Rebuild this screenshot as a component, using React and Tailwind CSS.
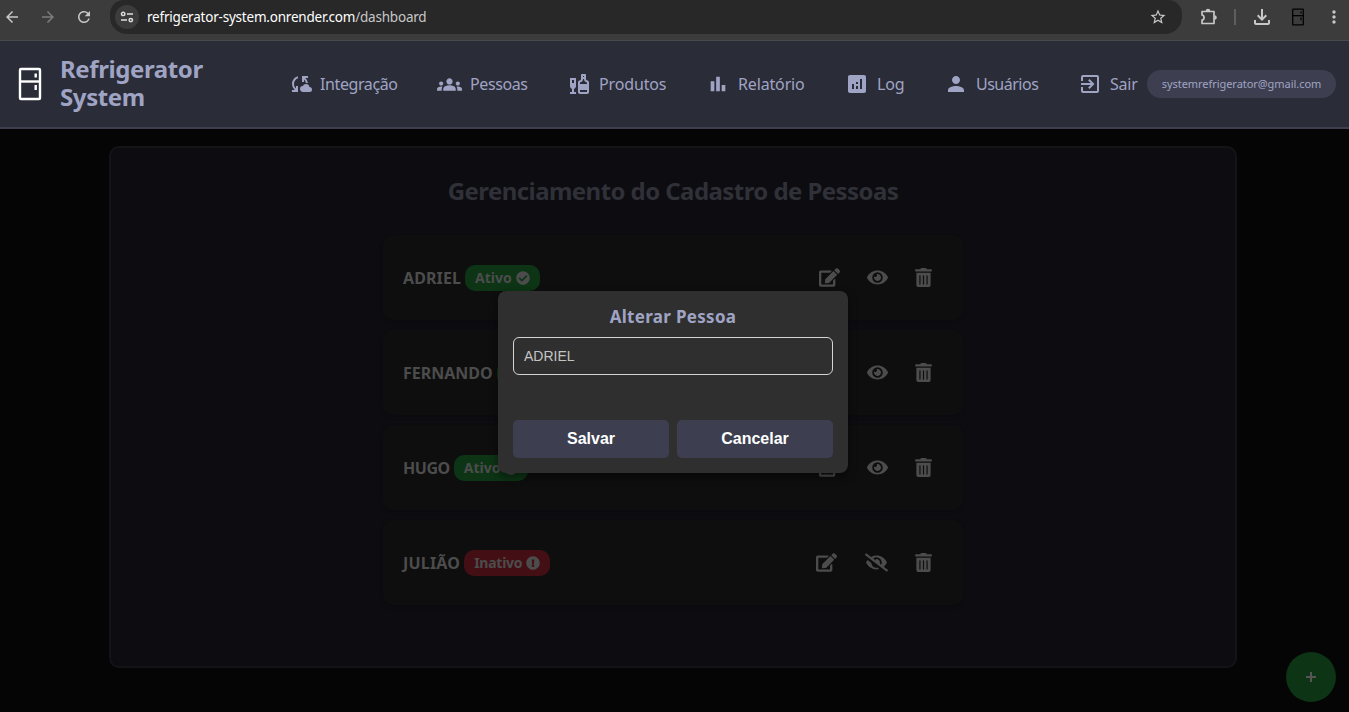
import React from "react";
import { MdCloudSync, MdGroups, MdLiquor, MdBarChart, MdAnalytics, MdPerson, MdExitToApp, MdStarBorder, MdOutlineFileDownload, MdMoreVert, MdArrowBack, MdArrowForward, MdRefresh } from "react-icons/md";
import { FaEdit, FaEye, FaEyeSlash, FaTrashAlt, FaCheckCircle, FaExclamationCircle } from "react-icons/fa";

function Fridge({ className }) {
  return (
    <svg viewBox="0 0 24 34" fill="none" stroke="currentColor" className={className}>
      <rect x="2" y="2" width="20" height="30" rx="1" strokeWidth="2.4" />
      <path d="M2 14.5H22" strokeWidth="2.4" />
      <path d="M17.7 6.5V10.5M17.7 18V23" strokeWidth="2.4" />
    </svg>
  );
}

function TuneIcon() {
  return (
    <svg viewBox="0 0 14 14" fill="none" stroke="#dedede" strokeWidth="1.5" className="h-[14px] w-[14px]">
      <circle cx="3.2" cy="3.9" r="1.7" />
      <path d="M7 3.9H13M1 10.1H7" />
      <circle cx="10.8" cy="10.1" r="1.7" />
    </svg>
  );
}

function ExtensionIcon({ className }) {
  return (
    <svg viewBox="0 0 18 18" className={className}>
      <path d="M2 3.5H14V15.5H2V12C4.7 12 4.7 7 2 7Z" fill="none" stroke="currentColor" strokeWidth="1.7" strokeLinejoin="round" />
      <path d="M5.7 3a2.3 2.3 0 0 1 4.6 0zM14.5 7.2a2.3 2.3 0 0 1 0 4.6z" fill="currentColor" />
    </svg>
  );
}

const nav = [
  { label: "Integração", Icon: MdCloudSync, icon: "-ml-[2px] mr-[8px] size-6", box: "w-[147px]", text: "tracking-[-0.4px]" },
  { label: "Pessoas", Icon: MdGroups, icon: "mr-[8px] size-[25px]", box: "w-[130px]", text: "tracking-[-0.4px]" },
  { label: "Produtos", Icon: MdLiquor, icon: "mr-[8px] size-6", box: "w-[139px]", text: "tracking-[-0.15px]" },
  { label: "Relatório", Icon: MdBarChart, icon: "ml-[1px] mr-[9px] size-[22px]", box: "w-[139px]", text: "tracking-[-0.15px]" },
  { label: "Log", Icon: MdAnalytics, icon: "mr-[8px] size-6", box: "w-[99px]", text: "tracking-[-0.2px]" },
  { label: "Usuários", Icon: MdPerson, icon: "mr-[8px] size-6", box: "w-[134px]", text: "tracking-[-0.5px]" },
  { label: "Sair", Icon: MdExitToApp, icon: "mr-[8px] size-6", box: "w-[69px]", text: "tracking-[-0.2px]" },
];

const people = [
  { name: "ADRIEL", active: true, text: "tracking-[0.1px]" },
  { name: "FERNANDO", active: true, text: "tracking-[0px]" },
  { name: "HUGO", active: true, text: "tracking-[-0.45px]" },
  { name: "JULIÃO", active: false, text: "tracking-[0.2px]" },
];

function BrowserBar() {
  return (
    <div className="flex h-[41px] shrink-0 items-start border-b border-[#4a4a4a] bg-[#3c3c3c] text-[#c7c7c7]">
      <div className="flex h-[34px] w-[110px] items-center">
        <MdArrowBack className="ml-[3px] size-[18px]" />
        <MdArrowForward className="ml-[18px] size-[18px] text-[#7c7c7c]" />
        <MdRefresh className="ml-[18px] size-[18px]" />
      </div>
      <div className="flex h-[34px] w-[1072px] items-center rounded-b-[17px] rounded-t-[14px] bg-[#282828] pl-[5px] pr-[15px]">
        <span className="flex size-6 items-center justify-center rounded-full bg-[#3c3c3c]"><TuneIcon /></span>
        <span className="ml-2 flex-1 text-[13.5px] tracking-[-0.21px] text-[#c7c7c7]"><span className="text-white">refrigerator-system.onrender.com</span>/dashboard</span>
        <MdStarBorder className="size-[18px]" />
      </div>
      <div className="flex h-[34px] flex-1 items-center">
        <ExtensionIcon className="ml-[18px] size-[18px]" />
        <span className="ml-[16px] h-4 w-[2px] bg-[#5e5e5e]" />
        <MdOutlineFileDownload className="ml-[14px] size-[24px]" />
        <Fridge className="ml-[17px] h-[18px] w-[14px] text-black" />
        <MdMoreVert className="ml-[19px] size-[20px]" />
      </div>
    </div>
  );
}

function Header() {
  return (
    <header className="flex h-[88px] shrink-0 items-center border-b-2 border-[#3d3f50] bg-[#2a2c37] text-[#a0a4c4]">
      <Fridge className="ml-[18px] h-[34px] w-6 text-white" />
      <h1 className="-mt-[2px] ml-[18px] w-[230px] text-[24px] font-bold leading-[28px] tracking-[-0.4px]">Refrigerator<br />System</h1>
      <nav className="flex">
        {nav.map(({ label, Icon, icon, box, text }) => (
          <a key={label} className={"flex shrink-0 items-center text-[16px] " + box}>
            <Icon className={"shrink-0 " + icon} />
            <span className={"whitespace-nowrap " + text}>{label}</span>
          </a>
        ))}
      </nav>
      <span className="flex h-7 w-[189px] items-center justify-center rounded-full bg-[#3d3f50] text-[11px] tracking-[-0.05px]">systemrefrigerator@gmail.com</span>
    </header>
  );
}

function PersonRow({ name, active, text }) {
  return (
    <li className="flex h-[85px] items-center rounded-[10px] bg-[#0e0e0e] pl-5 pr-[31px] text-[#4c4c4c] shadow-[0_2px_4px_rgba(0,0,0,0.15)]">
      <span className={"text-[16px] font-bold " + text}>{name}</span>
      <span className={"ml-1 flex h-[26px] items-center gap-1 rounded-[10px] px-[10px] text-[14px] font-bold " + (active ? "bg-[#0c3415]" : "bg-[#430f15] tracking-[-0.25px]")}>
        {active ? "Ativo" : "Inativo"}
        {active ? <FaCheckCircle className="size-[14px]" /> : <FaExclamationCircle className="size-[14px]" />}
      </span>
      <span className="ml-auto flex items-center">
        <FaEdit className="h-[19px] w-[21px]" />
        {active ? <FaEye className="ml-[27px] h-[19px] w-[21px]" /> : <FaEyeSlash className="ml-[28px] h-[19px] w-[23px]" />}
        <FaTrashAlt className="ml-[27px] h-[19px] w-[17px]" />
      </span>
    </li>
  );
}

function EditDialog() {
  return (
    <div className="absolute left-[498px] top-[291px] flex h-[182px] w-[350px] flex-col rounded-[8px] bg-[#2f2f2f] px-[15px] pt-[15px] shadow-[0_4px_10px_rgba(0,0,0,0.45)]">
      <h3 className="text-center text-[17px] font-bold leading-[22px] tracking-[0.3px] text-[#a0a4c4]">Alterar Pessoa</h3>
      <input defaultValue="ADRIEL" className="mt-[9px] h-[38px] w-full rounded-[6px] border border-[#d4d4d4] bg-transparent px-[10px] font-['Liberation_Sans',sans-serif] text-[14px] text-[#c4c4c4] outline-none" />
      <div className="mt-[45px] flex gap-2 font-['Liberation_Sans',sans-serif] text-[16px] font-bold text-white">
        <button className="h-[38px] flex-1 rounded-[5px] bg-[#3d3f50]">Salvar</button>
        <button className="h-[38px] flex-1 rounded-[5px] bg-[#3d3f50]">Cancelar</button>
      </div>
    </div>
  );
}

export default function App() {
  return (
    <div className="relative flex h-[712px] w-[1349px] flex-col overflow-hidden bg-[#050505] font-['Noto_Sans','Open_Sans',sans-serif]">
      <BrowserBar />
      <Header />
      <main className="ml-[109px] mt-[17px] h-[522px] w-[1128px] rounded-[10px] border-2 border-[#131318] bg-[#0d0c11]">
        <h2 className="mt-[27px] text-center text-[24px] font-bold leading-[32px] tracking-[-0.57px] text-[#303138]">Gerenciamento do Cadastro de Pessoas</h2>
        <ul className="ml-[272px] mt-[28px] flex w-[580px] flex-col gap-[10px]">
          {people.map((p) => <PersonRow key={p.name} {...p} />)}
        </ul>
      </main>
      <button className="absolute left-[1286px] top-[652px] flex size-[50px] items-center justify-center rounded-full bg-[#0c3415] text-[#555555]">
        <svg viewBox="0 0 10 10" stroke="currentColor" strokeWidth="2" className="size-[10px]"><path d="M5 0V10M0 5H10" /></svg>
      </button>
      <EditDialog />
    </div>
  );
}
